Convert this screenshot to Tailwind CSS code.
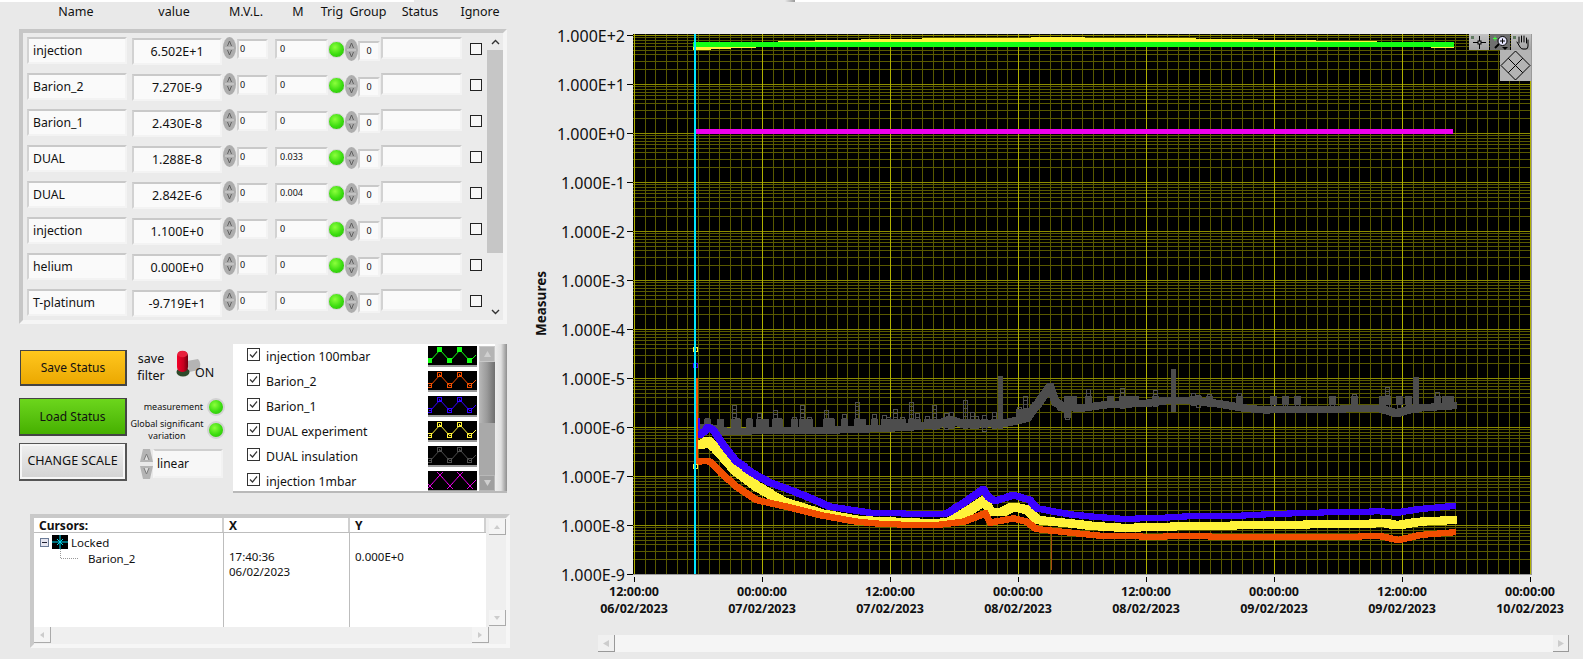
<!DOCTYPE html>
<html lang="en">
<head>
  <meta charset="UTF-8">
  <title>Measures</title>
  <script src="https://cdn.jsdelivr.net/npm/@tailwindcss/browser@4"></script>
</head>
<body class="bg-[#e9e9e9] overflow-hidden">
<div class="relative flex w-[1583px] h-[659px] overflow-hidden bg-[#e9e9e9] text-[#111] font-['Noto_Sans',sans-serif]">
  <!-- window edge left over from the screen grab -->
  <div class="absolute top-0 left-0 w-[414px] h-[2px] bg-white"></div>
  <div class="absolute top-0 left-[785px] w-[10px] h-[2px] bg-linear-to-r from-[#e9e9e9] to-[#999]"></div>
  <div class="absolute top-0 left-[795px] right-0 h-[2px] bg-white"></div>

  <!-- left column -->
  <div class="w-[520px] shrink-0 flex flex-col">
    <div class="flex h-[29px] items-center text-[12.5px] text-center pb-[5px]">
      <div class="ml-[26px] w-[100px]">Name</div>
      <div class="ml-[18px] w-[60px]">value</div>
      <div class="ml-[20px] w-[44px]">M.V.L.</div>
      <div class="ml-[18px] w-[24px]">M</div>
      <div class="ml-[8px] w-[28px]">Trig</div>
      <div class="w-[44px]">Group</div>
      <div class="ml-[5px] w-[50px]">Status</div>
      <div class="ml-[15px] w-[40px]">Ignore</div>
    </div>

    <div class="ml-[19px] w-[488px] h-[295px] flex bg-[#ebebeb] border-4 border-t-[#c6c6c6] border-l-[#c6c6c6] border-r-[#f5f5f5] border-b-[#f5f5f5]">
      <div id="rows" class="w-[464px] pl-[4px] pt-[3px]"></div>
      <div class="w-[16px] flex flex-col">
        <div class="h-[17px] flex items-center justify-center">
          <svg width="9" height="6" viewBox="0 0 9 6"><path d="M1 5 L4.5 1.5 L8 5" fill="none" stroke="#333" stroke-width="1.4"/></svg>
        </div>
        <div class="h-[203px] bg-[#c6c6c6]"></div>
        <div class="flex-1"></div>
        <div class="h-[17px] flex items-center justify-center">
          <svg width="9" height="6" viewBox="0 0 9 6"><path d="M1 1 L4.5 4.5 L8 1" fill="none" stroke="#333" stroke-width="1.4"/></svg>
        </div>
      </div>
    </div>

    <!-- buttons, switches, plot legend -->
    <div class="flex mt-[20px] h-[149px]">
      <div class="ml-[19px] w-[108px] flex flex-col text-[12px] text-center">
        <div class="ml-[1px] mt-[6px] h-[36px] flex items-center justify-center border border-[#444] border-r-2 border-b-2 bg-linear-to-b from-[#ffc71c] to-[#eba800]">Save Status</div>
        <div class="mt-[12px] h-[38px] flex items-center justify-center border border-[#444] border-r-2 border-b-2 bg-linear-to-b from-[#6cd61c] to-[#46b000]">Load Status</div>
        <div class="mt-[7px] h-[38px] flex items-center justify-center border border-[#555] border-r-2 border-b-2 shadow-[inset_0_0_0_2px_#f6f6f6] bg-linear-to-b from-[#f0f0f0] to-[#d2d2d2] text-[12.5px]">CHANGE SCALE</div>
      </div>
      <div class="w-[106px] flex flex-col">
        <div class="h-[54px] flex">
          <div class="ml-[9px] mt-[6px] text-[12.5px] leading-[17px] text-center w-[30px]">save<br>filter</div>
          <div class="relative ml-[7px] w-[41px] h-[38px] mt-[5px]">
            <svg width="35" height="30" viewBox="0 0 35 30">
              <defs><linearGradient id="redCap" x1="0" x2="1" y1="0" y2="0"><stop offset="0" stop-color="#f5002a"/><stop offset="0.6" stop-color="#c4001e"/><stop offset="1" stop-color="#70000f"/></linearGradient></defs>
              <path d="M14 12 L25 10 Q29 14 26 21 L16 23 Z" fill="#b4b4b4"/>
              <ellipse cx="10" cy="23" rx="6.5" ry="4.5" fill="#2e4a2a"/>
              <rect x="4" y="2" width="11" height="21" rx="5" fill="url(#redCap)"/>
              <ellipse cx="9.5" cy="5" rx="5" ry="3.2" fill="#e8203c"/>
            </svg>
            <span class="absolute left-[22px] top-[15px] text-[12.5px] leading-[17px]">ON</span>
          </div>
        </div>
        <div class="h-[18px] flex items-center justify-end text-[9px] pr-[8px]">
          <span class="mr-[4px]">measurement</span>
          <span class="w-[18px] h-[18px] rounded-full border-2 border-[#d2d2d2] bg-[radial-gradient(circle_at_40%_35%,#8cff3c,#3bdc10_55%,#28b808)]"></span>
        </div>
        <div class="h-[28px] flex items-center text-[9px] leading-[12px] text-center">
          <span class="w-[80px] whitespace-nowrap">Global significant<br>variation</span>
          <span class="w-[18px] h-[18px] rounded-full border-2 border-[#d2d2d2] bg-[radial-gradient(circle_at_40%_35%,#8cff3c,#3bdc10_55%,#28b808)]"></span>
        </div>
        <div class="flex ml-[13px] mt-[5px]">
          <svg width="13" height="30" viewBox="0 0 13 30">
            <path d="M3 0 H10 L13 13 H0 Z M0 17 H13 L10 30 H3 Z" fill="#b4b4b4"/>
            <path d="M4 11 L6.5 5 L9 11 M4 19 L6.5 25 L9 19" fill="#ddd" stroke="#7d7d7d"/>
          </svg>
          <div class="w-[70px] h-[29px] pl-[2px] flex items-center text-[12px] bg-[#f7f7f7] border-2 border-t-[#cfcfcf] border-l-[#f7f7f7] border-r-[#f2f2f2] border-b-[#f2f2f2]">linear</div>
        </div>
      </div>
      <div class="w-[274px] flex border-b-2 border-b-[#b9b9b9]">
        <div id="legend" class="w-[246px] h-[147px] bg-white pl-[14px] overflow-hidden"></div>
        <div class="w-[16px] h-[147px] bg-white flex flex-col pt-[2px]">
          <div class="h-[16px] bg-[#b4b4b4] flex items-center justify-center border border-[#c8c8c8]"><svg width="7" height="6" viewBox="0 0 7 6"><path d="M0 6 L3.5 0 L7 6 Z" fill="#cfcfcf"/></svg></div>
          <div class="h-[61px] bg-linear-to-r from-[#b9b9b9] via-[#9a9a9a] to-[#6f6f6f]"></div>
          <div class="h-[52px] bg-[#a9a9a9]"></div>
          <div class="h-[16px] bg-[#9f9f9f] flex items-center justify-center border border-[#b8b8b8]"><svg width="7" height="6" viewBox="0 0 7 6"><path d="M0 0 L3.5 6 L7 0 Z" fill="#cfcfcf"/></svg></div>
        </div>
        <div class="w-[12px] h-[147px] bg-linear-to-r from-[#ededed] via-[#e0e0e0] to-[#8f8f8f]"></div>
      </div>
    </div>

    <!-- cursor table -->
    <div class="ml-[30px] mt-[21px] w-[480px] h-[134px] flex flex-col bg-[#efefef] border-4 border-t-[#c9c9c9] border-l-[#c9c9c9] border-r-[#f6f6f6] border-b-[#f6f6f6]">
      <div class="flex h-[110px]">
        <div class="w-[452px] bg-white flex flex-col text-[11.5px] leading-[15px]">
          <div class="flex h-[15px] border-b border-b-[#bdbdbd] font-bold text-[12px]">
            <div class="w-[190px] pl-[5px] border-r-2 border-r-[#d0d0d0]">Cursors:</div>
            <div class="w-[126px] pl-[5px] border-r-2 border-r-[#d0d0d0]">X</div>
            <div class="flex-1 pl-[5px] border-r-2 border-r-[#d0d0d0]">Y</div>
          </div>
          <div class="flex flex-1">
            <div class="relative w-[190px] border-r border-r-[#bdbdbd]">
              <div class="flex items-center h-[16px] ml-[6px] mt-[1px]">
                <svg width="32" height="14" viewBox="0 0 32 14">
                  <rect x="0.5" y="3.5" width="8" height="8" fill="#e6e6f0" stroke="#6a7a96"/>
                  <path d="M2 7.5 H7" stroke="#223" />
                  <rect x="12" y="0" width="16" height="14" fill="#000"/>
                  <path d="M20 0 V14 M12 7 H28" stroke="#00d8f0"/>
                  <path d="M17 4 L23 10 M23 4 L17 10" stroke="#00d8f0"/>
                </svg>
                <span class="-ml-[1px]">Locked</span>
              </div>
              <svg class="absolute left-[26px] top-[16px]" width="18" height="12" viewBox="0 0 18 12"><path d="M0.5 0 V9.5 H18" fill="none" stroke="#999" stroke-dasharray="1 1"/></svg>
              <div class="ml-[54px] mt-[1px]">Barion_2</div>
            </div>
            <div class="w-[126px] pl-[5px] pt-[16px] border-r border-r-[#bdbdbd]">17:40:36<br>06/02/2023</div>
            <div class="flex-1 pl-[5px] pt-[16px]">0.000E+0</div>
          </div>
        </div>
        <div class="flex-1 flex flex-col justify-between pl-[3px] pt-[1px] pb-[1px]">
          <div class="w-[17px] h-[16px] flex items-center justify-center bg-[#f4f4f4] border-r border-b border-r-[#aaa] border-b-[#aaa]"><svg width="6" height="4" viewBox="0 0 6 4"><path d="M0 4 L3 0 L6 4 Z" fill="#ccc"/></svg></div>
          <div class="w-[17px] h-[16px] flex items-center justify-center bg-[#f4f4f4] border-r border-b border-r-[#aaa] border-b-[#aaa]"><svg width="6" height="4" viewBox="0 0 6 4"><path d="M0 0 L3 4 L6 0 Z" fill="#ccc"/></svg></div>
        </div>
      </div>
      <div class="flex justify-between w-[455px] h-[17px]">
        <div class="w-[17px] h-[16px] flex items-center justify-center bg-[#f4f4f4] border-r border-b border-r-[#aaa] border-b-[#aaa]"><svg width="4" height="6" viewBox="0 0 4 6"><path d="M4 0 L0 3 L4 6 Z" fill="#ccc"/></svg></div>
        <div class="w-[17px] h-[16px] flex items-center justify-center bg-[#f4f4f4] border-r border-b border-r-[#aaa] border-b-[#aaa]"><svg width="4" height="6" viewBox="0 0 4 6"><path d="M0 0 L4 3 L0 6 Z" fill="#ccc"/></svg></div>
      </div>
    </div>
  </div>

  <!-- graph -->
  <div class="flex-1 flex flex-col">
    <div class="flex h-[575px]">
      <div class="w-[34px] pt-[34px] pl-[11px] flex items-center">
        <span class="block [writing-mode:vertical-rl] rotate-180 font-bold text-[13.5px] -mt-[1px]">Measures</span>
      </div>
      <div id="yLabels" class="w-[79px] pt-[11px] text-[16px]"></div>
      <div class="relative w-[900px] pt-[34px]">
        <svg id="plot" class="block" width="900" height="541" viewBox="633 34 900 541" shape-rendering="crispEdges"></svg>
        <!-- graph palette -->
        <div class="absolute top-[34px] right-[2px] flex flex-col items-end">
          <div class="flex gap-px">
            <div class="w-[20px] h-[16px] bg-linear-to-b from-[#c4c4c4] to-[#a2a2a2] relative">
              <svg width="20" height="16" viewBox="0 0 20 16"><rect x="2" y="2" width="3" height="3" fill="#5f7a5f"/><path d="M10.5 2 V15 M4 8.5 H17" stroke="#000"/><rect x="9" y="7" width="3" height="3" fill="#bbb" stroke="#000"/></svg>
            </div>
            <div class="w-[20px] h-[16px] bg-[#707070]">
              <svg width="20" height="16" viewBox="0 0 20 16"><path d="M3 4.5 H7 M5 2.5 V6.5" stroke="#40ff40"/><path d="M5 14 L9 10" stroke="#000" stroke-width="2"/><circle cx="12.500" cy="7" r="4.500" fill="#e8e8ff" stroke="#000"/><path d="M10 7 H15 M12.500 4.500 V9.500" stroke="#000"/><path d="M12 13 H18 L15 16 Z" fill="#000"/></svg>
            </div>
            <div class="w-[20px] h-[16px] bg-linear-to-b from-[#c4c4c4] to-[#a2a2a2]">
              <svg width="20" height="16" viewBox="0 0 20 16"><rect x="2" y="2" width="3" height="3" fill="#5f7a5f"/><path d="M6 8 L9 13 Q10 15 12 15 H15 Q17 15 17 12 V6 M8 9 V3 M10.500 8 V2 M13 8 V2 M15.500 9 V4" fill="none" stroke="#000" stroke-linecap="round" shape-rendering="auto"/></svg>
            </div>
          </div>
          <div class="w-[31px] h-[31px] bg-[#b4b4b4]">
            <svg width="31" height="31" viewBox="0 0 31 31" shape-rendering="auto"><path d="M15.500 1 L30 15.500 L15.500 30 L1 15.500 Z M8.250 8.250 L22.750 22.750 M22.750 8.250 L8.250 22.750" fill="none" stroke="#000"/></svg>
          </div>
        </div>
      </div>
    </div>
    <div id="xLabels" class="flex ml-[50px] text-[12.5px] font-bold leading-[17px]"></div>
    <div class="ml-[78px] mt-[18px] w-[971px] h-[17px] flex justify-between bg-[#f5f5f5]">
      <div class="w-[17px] h-[17px] flex items-center justify-center bg-[#f0f0f0] border-r border-b border-r-[#999] border-b-[#999]"><svg width="6" height="7" viewBox="0 0 6 7"><path d="M6 0 L0 3.500 L6 7 Z" fill="#ccc"/></svg></div>
      <div class="w-[16px] h-[17px] flex items-center justify-center bg-[#f0f0f0] border-r border-b border-r-[#999] border-b-[#999]"><svg width="6" height="7" viewBox="0 0 6 7"><path d="M0 0 L6 3.500 L0 7 Z" fill="#ccc"/></svg></div>
    </div>
  </div>
</div>

<script>
  const channels = [
    ['injection', '6.502E+1', '0'], ['Barion_2', '7.270E-9', '0'], ['Barion_1', '2.430E-8', '0'],
    ['DUAL', '1.288E-8', '0.033'], ['DUAL', '2.842E-6', '0.004'], ['injection', '1.100E+0', '0'],
    ['helium', '0.000E+0', '0'], ['T-platinum', '-9.719E+1', '0']
  ];
  const bevel = 'border-2 border-t-[#c9c9c9] border-l-[#d2d2d2] border-r-[#f3f3f3] border-b-[#f3f3f3] bg-[#fafafa]';
  const spinner = `<svg width="13" height="22" viewBox="0 0 13 22"><ellipse cx="6.500" cy="11" rx="6.500" ry="11" fill="#adadad"/><path d="M4.500 9 L6.500 4 L8.500 9 M4.500 13 L6.500 18 L8.500 13" fill="none" stroke="#5f5f5f"/><path d="M2 11 H11" stroke="#d8d8d8"/></svg>`;

  document.getElementById('rows').innerHTML = channels.map(([name, value, m]) => `
    <div class="flex items-start h-[36px]">
      <div class="${bevel} w-[100px] h-[27px] mt-[1px] pl-[4px] pt-px flex items-center text-[12.25px]">${name}</div>
      <div class="${bevel} ml-[5px] w-[90px] h-[27px] mt-[2px] pt-px flex items-center justify-center text-[12.5px]">${value}</div>
      <div class="ml-[1px] mt-[1px] w-[13px] h-[22px]">${spinner}</div>
      <div class="${bevel} ml-[1px] w-[31px] h-[20px] mt-[3px] pl-[1px] flex items-center text-[9px]">0</div>
      <div class="${bevel} ml-[7px] w-[53px] h-[20px] mt-[3px] pl-[3px] flex items-center text-[9px]">${m}</div>
      <div class="w-[17px] h-[17px] mt-[5px] rounded-full border border-[#d6d6d6] bg-[radial-gradient(circle_at_40%_35%,#8cff3c,#3bdc10_55%,#28b808)]"></div>
      <div class="mt-[3px] w-[12px] h-[22px]">${spinner}</div>
      <div class="${bevel} ml-[1px] w-[22px] h-[20px] mt-[5px] flex items-center justify-center text-[9px]">0</div>
      <div class="${bevel} ml-[1px] w-[81px] h-[22px] mt-[1px]"></div>
      <div class="ml-[8px] mt-[7px] w-[12px] h-[12px] border border-[#222] bg-[#f7f7f7]"></div>
    </div>`).join('');

  const zigzag = 'M2 15 L12 4 L22 15 L32 4 L42 15 L48 9';
  const marks = [[2, 15], [12, 4], [22, 15], [32, 4], [42, 15]];
  const legendRows = [
    ['injection 100mbar', '#14ff14', true], ['Barion_2', '#f04e00', false], ['Barion_1', '#3300ff', false],
    ['DUAL experiment', '#fff23a', false], ['DUAL insulation', '#4d4d4d', false], ['injection 1mbar', '#e000e0', null]
  ];
  document.getElementById('legend').innerHTML = legendRows.map(([label, color, fill]) => {
    const squares = fill === null
      ? marks.map(([x, y]) => `<path d="M${x - 3} ${y - 3} l6 6 m0 -6 l-6 6" stroke="${color}" shape-rendering="auto"/>`).join('')
      : marks.map(([x, y]) => fill
          ? `<rect x="${x - 3}" y="${y - 3}" width="5" height="5" fill="${color}"/>`
          : `<rect x="${x - 2.5}" y="${y - 2.5}" width="4" height="4" fill="none" stroke="${color}"/><rect x="${x - 1}" y="${y - 1}" width="1" height="1" fill="${color}"/>`).join('');
    return `
    <div class="flex items-start h-[25px]">
      <svg class="mt-[4px]" width="13" height="13" viewBox="0 0 13 13"><rect x="0.500" y="0.500" width="12" height="12" fill="#fff" stroke="#333"/><path d="M3 6.500 L5.500 9 L10 3.500" fill="none" stroke="#333" stroke-width="1.200"/></svg>
      <span class="ml-[6px] w-[162px] text-[12.25px] leading-[25px]">${label}</span>
      <svg class="mt-[2px] border-b-2 border-b-[#9a9a9a]" width="49" height="21" viewBox="0 0 49 19" preserveAspectRatio="none" shape-rendering="crispEdges"><rect width="49" height="21" fill="#000"/><path d="${zigzag}" fill="none" stroke="${color}" shape-rendering="auto"/>${squares}</svg>
    </div>`;
  }).join('');

  const yTexts = ['1.000E+2', '1.000E+1', '1.000E+0', '1.000E-1', '1.000E-2', '1.000E-3', '1.000E-4', '1.000E-5', '1.000E-6', '1.000E-7', '1.000E-8', '1.000E-9'];
  document.getElementById('yLabels').innerHTML = yTexts.map(t => `
    <div class="h-[49px] flex items-center justify-end"><span class="mr-[2px]">${t}</span><span class="w-[6px] h-px bg-black"></span></div>`).join('');

  const xTexts = [['12:00:00', '06/02/2023'], ['00:00:00', '07/02/2023'], ['12:00:00', '07/02/2023'], ['00:00:00', '08/02/2023'], ['12:00:00', '08/02/2023'], ['00:00:00', '09/02/2023'], ['12:00:00', '09/02/2023'], ['00:00:00', '10/02/2023']];
  document.getElementById('xLabels').innerHTML = xTexts.map(([t, d]) => `
    <div class="w-[128px] shrink-0 flex flex-col items-center text-center">
      <span class="w-px h-[5px] mt-[2px] mb-px bg-black"></span>
      <span>${t}</span><span>${d}</span>
    </div>`).join('');

  // plot: drawn in screen coordinates, viewBox starts at the plot corner
  const LEFT = 633, TOP = 34, RIGHT = 1531, BOTTOM = 575;
  let minor = '', major = '', decade = '';
  for (let i = 0; i <= 84; i++) {
    const x = Math.round(634 + i * 128 / 12) + 0.5;
    if (i % 12 === 0) major += `M${x} ${TOP} V${BOTTOM} `;
    else minor += `M${x} ${TOP} V${BOTTOM} `;
  }
  for (let d = 0; d <= 10; d++) {
    const y0 = 35 + 49 * d;
    decade += `M${LEFT} ${y0 + 0.5} H${RIGHT} `;
    for (let k = 2; k <= 9; k++) {
      const y = Math.round(y0 + 49 * (1 - Math.log10(k))) + 0.5;
      minor += `M${LEFT} ${y} H${RIGHT} `;
    }
  }
  decade += `M${LEFT} 574.500 H${RIGHT} `;

  const fromA = pts => pts.map(([x, y]) => [670 + x / 3, 330 + y / 3]);
  const fromB = pts => pts.map(([x, y]) => [1060 + x / 3, 340 + y / 3]);

  // traces are drawn as stamped square markers, that gives the staircase edge of the real graph
  function stamp(pts, w, h) {
    const seen = new Set();
    let d = '';
    for (let s = 0; s < pts.length - 1; s++) {
      const [ax, ay] = pts[s], [bx, by] = pts[s + 1];
      const n = Math.ceil(Math.max(Math.abs(bx - ax), Math.abs(by - ay)));
      for (let i = 0; i <= n; i++) {
        const x = Math.round(ax + (bx - ax) * i / n - w / 2);
        const y = Math.round(ay + (by - ay) * i / n - h / 2);
        const key = x + ',' + y;
        if (seen.has(key)) continue;
        seen.add(key);
        d += `M${x} ${y}h${w}v${h}h-${w}z`;
      }
    }
    return d;
  }

  const gray = [...fromA([[85, 295], [110, 292], [150, 300], [170, 305], [300, 301], [500, 300], [650, 295], [800, 285], [840, 268], [880, 282], [1000, 280], [1070, 265], [1100, 225], [1140, 170], [1155, 215], [1190, 235]]),
                ...fromB([[0, 200], [60, 205], [130, 195], [260, 190], [330, 180], [400, 183], [470, 190], [560, 205], [620, 210], [820, 208], [900, 205], [960, 205], [1010, 220], [1060, 205], [1180, 197]])];
  const blue = [...fromA([[90, 315], [115, 292], [130, 300], [160, 345], [200, 395], [250, 430], [300, 458], [400, 495], [480, 530], [600, 548], [800, 553], [830, 550], [880, 520], [940, 478], [955, 500], [975, 513], [1030, 495], [1080, 510], [1100, 535], [1200, 553]]),
                ...fromB([[100, 530], [180, 536], [280, 535], [400, 528], [540, 527], [640, 522], [800, 517], [960, 514], [1010, 518], [1080, 507], [1180, 498]])];
  const yellow = [...fromA([[90, 345], [115, 332], [150, 370], [200, 425], [260, 470], [340, 515], [450, 550], [560, 570], [800, 580], [840, 575], [900, 540], [945, 510], [960, 545], [1000, 545], [1030, 530], [1075, 540], [1100, 570], [1200, 580]]),
                  ...fromB([[100, 558], [180, 563], [280, 562], [400, 557], [640, 556], [800, 552], [980, 550], [1010, 556], [1080, 545], [1180, 540]])];
  const orange = [...fromA([[85, 395], [115, 392], [150, 425], [200, 470], [260, 510], [350, 530], [450, 555], [560, 575], [650, 583], [800, 585], [880, 575], [945, 550], [960, 578], [1030, 565], [1070, 575], [1100, 597], [1200, 608]]),
                  ...fromB([[130, 588], [280, 590], [420, 588], [500, 592], [800, 592], [960, 588], [1015, 600], [1080, 585], [1180, 577]])];

  // little stacks of open square markers along the gray trace, with a solid foot where they meet it
  const towersA = [[110, 265], [150, 268], [192, 225], [200, 265], [238, 265], [268, 250], [284, 268], [316, 240], [328, 265], [373, 262], [397, 225], [418, 262], [468, 240], [482, 265], [522, 252], [562, 217], [575, 270], [612, 252], [642, 255], [655, 260], [676, 238], [697, 262], [722, 217], [742, 250], [770, 258], [793, 225], [828, 248], [842, 245], [886, 210], [905, 245], [918, 258], [942, 256], [972, 245], [1048, 232], [1066, 198], [1192, 208]];
  const towersB = [[22, 178], [85, 148], [40, 185], [150, 178], [185, 145], [205, 175], [225, 170], [285, 150], [398, 160], [415, 165], [448, 162], [538, 160], [640, 178], [676, 186], [712, 178], [815, 168], [882, 162], [965, 184], [982, 142], [1018, 180], [1045, 184], [1130, 157], [1155, 178], [1170, 178]];
  let towers = '', feet = '';
  const stack = (x, top, base) => {
    const rx = Math.round(x) - 1.5;
    for (let y = Math.round(top) + 0.5; y < base; y += 4) towers += `M${rx} ${y} h4 v4 h-4 Z `;
    feet += `M${Math.round(x) - 3} ${base - 9}h7v9h-7z`;
  };
  towersA.forEach(([x, y]) => stack(670 + x / 3, 330 + y / 3, x > 1040 ? 418 : 428));
  towersB.forEach(([x, y]) => stack(1060 + x / 3, 340 + y / 3, 405));

  const yellowTop = [[778, 41], [815, 40], [861, 39], [922, 38], [1031, 37], [1085, 38], [1196, 39], [1258, 40], [1316, 41], [1377, 41]];
  let yellowBars = '';
  for (let i = 0; i < yellowTop.length - 1; i++) {
    const [x, y] = yellowTop[i];
    yellowBars += `<rect x="${x}" y="${y}" width="${yellowTop[i + 1][0] - x}" height="${42 - y}" fill="#fff23a"/>`;
  }

  document.getElementById('plot').innerHTML = `
    <rect x="${LEFT}" y="${TOP}" width="898" height="541" fill="#000"/>
    <path d="${minor}" stroke="#595900" fill="none"/>
    <path d="${decade}" stroke="#8c8c00" fill="none"/>
    <path d="${major}" stroke="#b0b000" fill="none"/>
    ${yellowBars}
    <rect x="693" y="47" width="18" height="3" fill="#fff23a"/>
    <rect x="711" y="47" width="20" height="2" fill="#fff23a"/>
    <rect x="731" y="47" width="25" height="1" fill="#fff23a"/>
    <rect x="1431" y="47" width="23" height="1" fill="#fff23a"/>
    <rect x="693" y="42" width="761" height="5" fill="#14ff14"/>
    <rect x="695" y="129" width="758" height="5" fill="#ee00ee"/>
    <path d="${towers}" stroke="#505050" fill="none"/>
    <path d="${feet}" fill="#4d4d4d"/>
    <path d="${stamp(gray, 7, 7)}" fill="#4d4d4d"/>
    <rect x="998" y="376" width="5" height="53" fill="#4d4d4d"/>
    <rect x="1171" y="369" width="5" height="43" fill="#4d4d4d"/>
    <rect x="1413" y="377" width="6" height="36" fill="#4d4d4d"/>
    <path d="M1051.500 533 V570" stroke="#a84a10" fill="none"/>
    <path d="${stamp(yellow, 8, 8)}" fill="#fff23a"/>
    <path d="M698.500 418 L700 435" stroke="#3a00ff" stroke-width="2" fill="none"/>
    <path d="${stamp(blue, 6, 6)}" fill="#3a00ff"/>
    <rect x="695" y="378" width="3" height="84" fill="#f04e00"/>
    <path d="${stamp(orange, 5, 6)}" fill="#f04e00"/>
    <rect x="693" y="347" width="4" height="4" fill="none" stroke="#fff23a"/>
    <rect x="693" y="363" width="4" height="4" fill="none" stroke="#3a00ff"/>
    <rect x="693" y="464" width="4" height="4" fill="none" stroke="#fff23a"/>
    <rect x="694" y="${TOP}" width="2" height="541" fill="#00e5ff"/>
    <rect x="1531" y="${TOP}" width="1" height="541" fill="#9a9a9a"/>
    <rect x="${LEFT}" y="574" width="899" height="1" fill="#9a9a9a"/>`;
</script>
</body>
</html>
